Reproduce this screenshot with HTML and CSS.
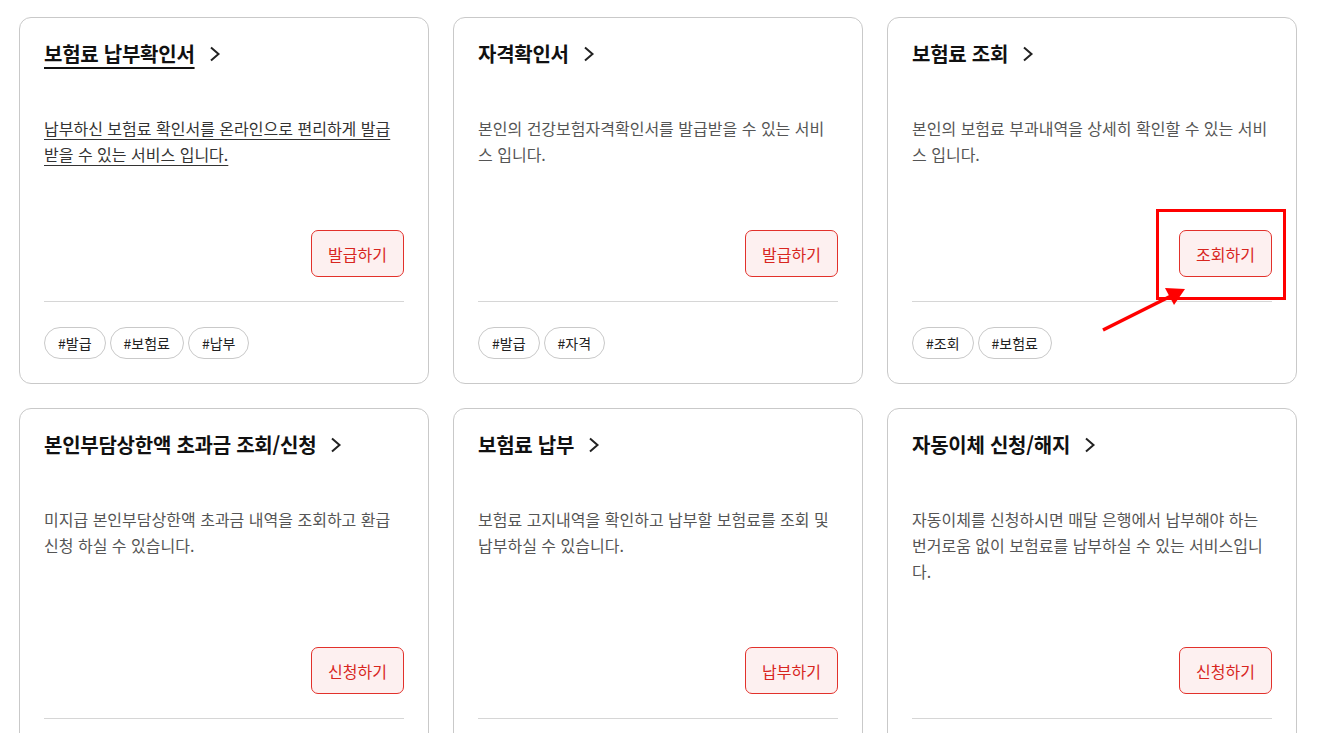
FILE: index.html
```html
<!DOCTYPE html>
<html lang="ko">
<head>
<meta charset="utf-8">
<title>서비스</title>
<link rel="stylesheet" href="styles.css">
</head>
<body>
<div class="grid">
  <div class="card hover">
    <a class="title" href="#"><span class="tt">보험료 납부확인서</span><svg class="chev" width="12" height="16" viewBox="0 0 12 16"><polyline points="2,1.5 9.5,8 2,14.5" fill="none" stroke="#222" stroke-width="2"/></svg></a>
    <p class="desc">납부하신 보험료 확인서를 온라인으로 편리하게 발급받을 수 있는 서비스 입니다.</p>
    <div class="btnrow"><button class="btn">발급하기</button></div>
    <div class="tags"><span class="tag">#발급</span><span class="tag">#보험료</span><span class="tag">#납부</span></div>
  </div>
  <div class="card">
    <a class="title" href="#"><span class="tt">자격확인서</span><svg class="chev" width="12" height="16" viewBox="0 0 12 16"><polyline points="2,1.5 9.5,8 2,14.5" fill="none" stroke="#222" stroke-width="2"/></svg></a>
    <p class="desc">본인의 건강보험자격확인서를 발급받을 수 있는 서비스 입니다.</p>
    <div class="btnrow"><button class="btn">발급하기</button></div>
    <div class="tags"><span class="tag">#발급</span><span class="tag">#자격</span></div>
  </div>
  <div class="card">
    <a class="title" href="#"><span class="tt">보험료 조회</span><svg class="chev" width="12" height="16" viewBox="0 0 12 16"><polyline points="2,1.5 9.5,8 2,14.5" fill="none" stroke="#222" stroke-width="2"/></svg></a>
    <p class="desc">본인의 보험료 부과내역을 상세히 확인할 수 있는 서비스 입니다.</p>
    <div class="btnrow"><button class="btn">조회하기</button></div>
    <div class="tags"><span class="tag">#조회</span><span class="tag">#보험료</span></div>
    <div class="mark-box"></div>
    <svg class="mark-arrow" width="100" height="60" viewBox="0 0 100 60"><line x1="4" y1="56" x2="74" y2="21" stroke="#ff0000" stroke-width="3.5"/><polygon points="86,15 66,14 75,31" fill="#ff0000"/></svg>
  </div>
  <div class="card">
    <a class="title" href="#"><span class="tt">본인부담상한액 초과금 조회/신청</span><svg class="chev" width="12" height="16" viewBox="0 0 12 16"><polyline points="2,1.5 9.5,8 2,14.5" fill="none" stroke="#222" stroke-width="2"/></svg></a>
    <p class="desc">미지급 본인부담상한액 초과금 내역을 조회하고 환급 신청 하실 수 있습니다.</p>
    <div class="btnrow"><button class="btn">신청하기</button></div>
    <div class="tags"></div>
  </div>
  <div class="card">
    <a class="title" href="#"><span class="tt">보험료 납부</span><svg class="chev" width="12" height="16" viewBox="0 0 12 16"><polyline points="2,1.5 9.5,8 2,14.5" fill="none" stroke="#222" stroke-width="2"/></svg></a>
    <p class="desc">보험료 고지내역을 확인하고 납부할 보험료를 조회 및 납부하실 수 있습니다.</p>
    <div class="btnrow"><button class="btn">납부하기</button></div>
    <div class="tags"></div>
  </div>
  <div class="card">
    <a class="title" href="#"><span class="tt">자동이체 신청/해지</span><svg class="chev" width="12" height="16" viewBox="0 0 12 16"><polyline points="2,1.5 9.5,8 2,14.5" fill="none" stroke="#222" stroke-width="2"/></svg></a>
    <p class="desc">자동이체를 신청하시면 매달 은행에서 납부해야 하는 번거로움 없이 보험료를 납부하실 수 있는 서비스입니다.</p>
    <div class="btnrow"><button class="btn">신청하기</button></div>
    <div class="tags"></div>
  </div>
</div>
</body>
</html>
```

FILE: styles.css
```css
html, body {
  margin: 0;
  padding: 0;
  background: #fff;
}
body {
  font-family: "Noto Sans CJK KR", "Noto Sans", sans-serif;
  color: #111;
  padding: 17px 0 0 19px;
}
.grid {
  display: grid;
  grid-template-columns: repeat(3, 410px);
  column-gap: 24px;
  row-gap: 24px;
}
.card {
  position: relative;
  box-sizing: border-box;
  border: 1px solid #c9c9c9;
  border-radius: 12px;
  padding: 24px 24px 24px 24px;
  display: flex;
  flex-direction: column;
  background: #fff;
}
.title {
  display: flex;
  align-items: center;
  height: 24px;
  font-size: 20px;
  font-weight: 700;
  color: #111;
  text-decoration: none;
  letter-spacing: -0.25px;
}
.tt {
  line-height: 24px;
}
.chev {
  margin-left: 14px;
  flex: none;
}
.desc {
  margin: 49px 0 0 0;
  font-size: 16px;
  line-height: 26px;
  color: #555;
  flex: 1;
}
.hover .tt {
  text-decoration: underline;
  text-underline-offset: 5px;
  text-decoration-thickness: 2px;
}
.hover .desc {
  color: #333;
  text-decoration: underline;
  text-underline-offset: 4px;
}
.btnrow {
  display: flex;
  justify-content: flex-end;
  margin-top: 63px;
  padding-bottom: 24px;
  border-bottom: 1px solid #d6d6d6;
}
.btn {
  box-sizing: border-box;
  width: 93px;
  height: 47px;
  border: 1px solid #e2312b;
  border-radius: 7px;
  background: #fdf0f0;
  color: #d8261f;
  font-family: "Noto Sans CJK KR", "Noto Sans", sans-serif;
  font-size: 16px;
  padding: 0;
}
.tags {
  display: flex;
  gap: 4px;
  margin-top: 25px;
  min-height: 32px;
}
.tag {
  box-sizing: border-box;
  height: 32px;
  padding: 0 13px;
  border: 1px solid #c9c9c9;
  border-radius: 16px;
  font-size: 14px;
  line-height: 30px;
  color: #222;
}
.mark-box {
  position: absolute;
  left: 268px;
  top: 191px;
  width: 130px;
  height: 91px;
  box-sizing: border-box;
  border: 3px solid #ff0000;
}
.mark-arrow {
  position: absolute;
  left: 211px;
  top: 256px;
}
```
